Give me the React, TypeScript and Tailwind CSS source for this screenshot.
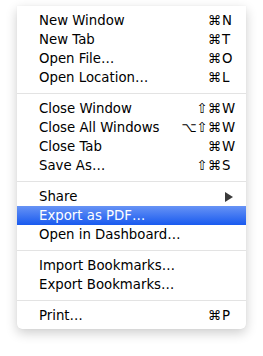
import React from "react";

type Item =
  | { type: "sep" }
  | { type: "item"; label: string; mods?: string; key?: string; submenu?: boolean; active?: boolean };

const items: Item[] = [
  { type: "item", label: "New Window", mods: "⌘", key: "N" },
  { type: "item", label: "New Tab", mods: "⌘", key: "T" },
  { type: "item", label: "Open File…", mods: "⌘", key: "O" },
  { type: "item", label: "Open Location…", mods: "⌘", key: "L" },
  { type: "sep" },
  { type: "item", label: "Close Window", mods: "⇧⌘", key: "W" },
  { type: "item", label: "Close All Windows", mods: "⌥⇧⌘", key: "W" },
  { type: "item", label: "Close Tab", mods: "⌘", key: "W" },
  { type: "item", label: "Save As…", mods: "⇧⌘", key: "S" },
  { type: "sep" },
  { type: "item", label: "Share", submenu: true },
  { type: "item", label: "Export as PDF…", active: true },
  { type: "item", label: "Open in Dashboard…" },
  { type: "sep" },
  { type: "item", label: "Import Bookmarks…" },
  { type: "item", label: "Export Bookmarks…" },
  { type: "sep" },
  { type: "item", label: "Print…", mods: "⌘", key: "P" },
];

export default function App() {
  return (
    <div
      className="w-[263px] h-[356px] bg-white pt-[6px] pl-[17px]"
      style={{ fontFamily: '"DejaVu Sans", sans-serif' }}
    >
      <div className="w-[229px] bg-white rounded-b-[5px] pt-[5px] pb-[4px] shadow-[0_4px_12px_rgba(0,0,0,0.2),0_0_1px_rgba(0,0,0,0.1)]">
        {items.map((it, i) =>
          it.type === "sep" ? (
            <div key={i} className="h-[12px] flex items-center">
              <div className="h-px w-full bg-[#e3e3e3]" />
            </div>
          ) : (
            <div
              key={i}
              className={
                "h-[19px] flex items-center pl-[22px] pr-[10px] text-[13.3px] leading-[19px] " +
                (it.active
                  ? "bg-[linear-gradient(#6793f5,#195aef)] text-white"
                  : "text-black")
              }
            >
              <span className="flex-1 whitespace-nowrap">{it.label}</span>
              <span className="whitespace-nowrap pr-[1px]">{it.mods ?? ""}</span>
              <span className="w-[14px] flex items-center">
                {it.key ?? ""}
                {it.submenu && (
                  <svg width="8" height="10" viewBox="0 0 8 10" className="ml-[3px]">
                    <path d="M0 0 L8 5 L0 10 Z" fill="#3a3a3a" />
                  </svg>
                )}
              </span>
            </div>
          )
        )}
      </div>
    </div>
  );
}
